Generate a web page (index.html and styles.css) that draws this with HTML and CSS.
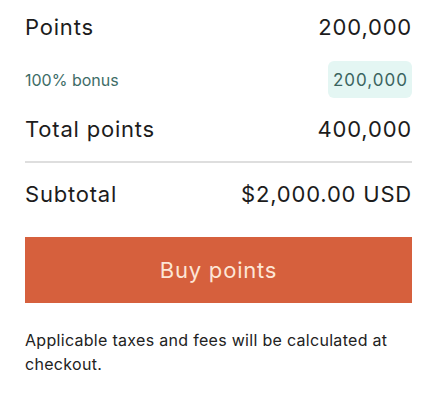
FILE: index.html
```html
<!DOCTYPE html>
<html lang="en">
<head>
<meta charset="utf-8">
<title>Buy points</title>
<link rel="stylesheet" href="styles.css">
</head>
<body>
  <section class="summary">
    <div class="row row-main">
      <span>Points</span>
      <span>200,000</span>
    </div>
    <div class="row row-bonus">
      <span class="bonus-label">100% bonus</span>
      <span class="bonus-pill">200,000</span>
    </div>
    <div class="row row-main row-total">
      <span>Total points</span>
      <span>400,000</span>
    </div>
    <hr class="divider">
    <div class="row row-main row-subtotal">
      <span>Subtotal</span>
      <span>$2,000.00 USD</span>
    </div>
    <button class="buy-btn" type="button">Buy points</button>
    <p class="note">Applicable taxes and fees will be calculated at checkout.</p>
  </section>
</body>
</html>
```

FILE: styles.css
```css
html, body {
  margin: 0;
  padding: 0;
  background: #ffffff;
}

body {
  font-family: Inter, "Noto Sans", sans-serif;
  color: #1c1c1c;
}

.summary {
  display: flex;
  flex-direction: column;
  padding: 13px 16px 0 25px;
}

.row {
  display: flex;
  justify-content: space-between;
  align-items: center;
}

.row-main {
  font-size: 22px;
  letter-spacing: 0.8px;
  line-height: 28px;
  height: 28px;
}

.row-bonus {
  margin-top: 20px;
  height: 37px;
  font-size: 16px;
}

.bonus-label {
  color: #3e6d67;
}

.bonus-pill {
  display: flex;
  align-items: center;
  height: 37px;
  padding: 0 4px 0 5px;
  border-radius: 6px;
  background: #e4f6f3;
  color: #3b645f;
  font-size: 17px;
  letter-spacing: 1px;
}

.row-total {
  margin-top: 17px;
}

.divider {
  margin: 18px 0 0 0;
  border: none;
  height: 2px;
  background: #dedede;
}

.row-subtotal {
  margin-top: 17px;
}

.buy-btn {
  margin-top: 29px;
  height: 66px;
  border: none;
  border-radius: 0;
  background: #d6603d;
  color: #fde6d6;
  font-family: inherit;
  font-size: 22px;
  letter-spacing: 0.8px;
  cursor: pointer;
}

.note {
  margin: 25px 0 0 0;
  font-size: 16px;
  letter-spacing: 0.3px;
  line-height: 24px;
  color: #222222;
}
```
